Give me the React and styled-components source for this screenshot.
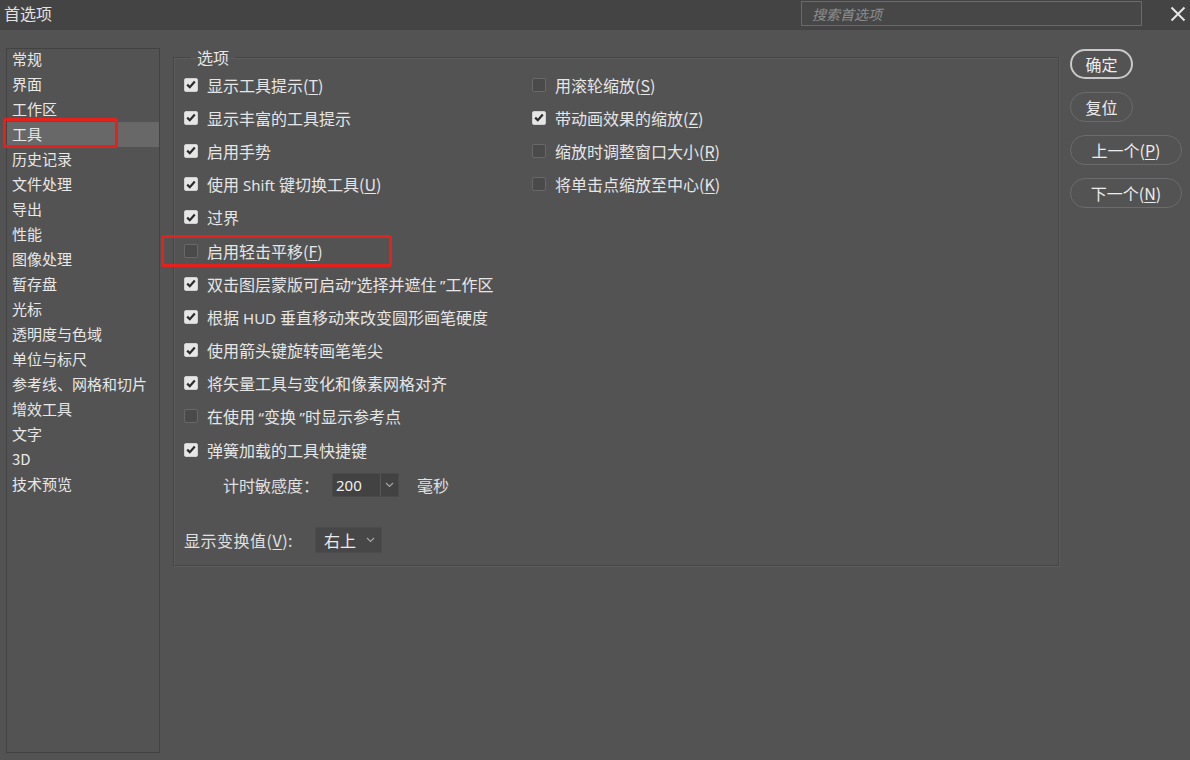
import React from "react";
import styled, { createGlobalStyle } from "styled-components";

const GlobalStyle = createGlobalStyle`
  html, body {
    margin: 0;
    padding: 0;
    background: #535353;
  }
  body {
    font-family: "Noto Sans CJK SC", "Noto Sans", sans-serif;
    color: #e4e4e4;
  }
`;

const Window = styled.div`
  width: 1190px;
  height: 760px;
  background: #535353;
  display: flex;
  flex-direction: column;
  overflow: hidden;
`;

const TitleBar = styled.div`
  height: 30px;
  background: #444444;
  display: flex;
  align-items: center;
  padding: 0 4px 0 4px;
`;

const Title = styled.div`
  font-size: 16px;
  color: #e2e2e2;
  line-height: 20px;
  margin-top: -5px;
`;

const Search = styled.div`
  margin-left: auto;
  width: 341px;
  height: 25px;
  margin-top: -3px;
  border: 1px solid #6a6a6a;
  background: #474747;
  display: flex;
  align-items: center;
  padding-left: 10px;
  box-sizing: border-box;
  font-size: 14px;
  font-style: italic;
  color: #8e8e8e;
`;

const Close = styled.div`
  width: 16px;
  height: 16px;
  margin-left: 28px;
  margin-top: -2px;
  svg {
    display: block;
  }
`;

const Body = styled.div`
  flex: 1;
  display: flex;
  align-items: flex-start;
  padding: 17px 0 0 6px;
`;

const CategoryList = styled.div`
  width: 154px;
  height: 705px;
  margin-top: 1px;
  box-sizing: border-box;
  border: 1px solid #424242;
  display: flex;
  flex-direction: column;
  & > :first-child {
    margin-top: -2px;
  }
`;

const Category = styled.div`
  position: relative;
  height: 25px;
  line-height: 24px;
  padding-left: 5px;
  font-size: 15px;
  color: #e8e8e8;
  background: ${(p) => (p.active ? "#686868" : "transparent")};
  ${(p) =>
    p.marked &&
    `
    &::after {
      content: "";
      position: absolute;
      left: -4px;
      top: -4px;
      width: 109px;
      height: 24px;
      border: 3px solid #e5211d;
      border-radius: 3px;
    }
  `}
`;

const Group = styled.fieldset`
  margin: 0 0 0 13px;
  width: 886px;
  height: 519px;
  box-sizing: border-box;
  padding: 1px 10px 0 10px;
  border: 1px solid #464646;
  box-shadow: inset 1px 1px 0 #5c5c5c, 1px 1px 0 #5c5c5c;
  min-width: 0;
`;

const Legend = styled.legend`
  margin-left: 7px;
  padding: 0 6px;
  font-size: 16px;
  line-height: 20px;
  color: #e6e6e6;
`;

const Columns = styled.div`
  display: grid;
  grid-template-columns: 348px 1fr;
`;

const Column = styled.div`
  display: flex;
  flex-direction: column;
`;

const Row = styled.div`
  position: relative;
  height: 33.2px;
  display: flex;
  align-items: center;
  gap: 9px;
  font-size: 16px;
  color: #e6e6e6;
  white-space: nowrap;
  ${(p) =>
    p.marked &&
    `
    &::after {
      content: "";
      position: absolute;
      left: -23px;
      top: 1px;
      width: 225px;
      height: 26px;
      border: 3px solid #e5211d;
      border-radius: 3px;
    }
  `}
`;

const Box = styled.span`
  width: 14px;
  height: 14px;
  box-sizing: border-box;
  border-radius: 2px;
  flex: none;
  display: flex;
  align-items: center;
  justify-content: center;
  background: ${(p) => (p.checked ? "#e6e6e6" : "#4a4a4a")};
  border: 1px solid ${(p) => (p.checked ? "#d0d0d0" : "#686868")};
`;

const Key = styled.span`
  text-decoration: underline;
  text-underline-offset: 2px;
`;

const Latin = styled.span`
  font-family: "Noto Sans", "Open Sans", sans-serif;
  font-size: 15px;
  margin: 0 ${(p) => (p.tight ? 0 : 4)}px;
`;

const SubRow = styled.div`
  display: flex;
  align-items: center;
  height: 36px;
  margin-top: 1px;
  padding-left: 39px;
  font-size: 16px;
  color: #e0e0e0;
`;

const SubLabel = styled.span`
  width: 109px;
`;

const Spinner = styled.div`
  width: 67px;
  height: 24px;
  background: #424242;
  border: 1px solid #4a4a4a;
  box-sizing: border-box;
  display: flex;
  align-items: stretch;
  font-family: "Noto Sans", sans-serif;
  font-size: 15px;
`;

const SpinValue = styled.div`
  flex: 1;
  display: flex;
  align-items: center;
  padding-left: 3px;
  color: #f0f0f0;
`;

const SpinArrow = styled.div`
  width: 17px;
  border-left: 1px solid #575757;
  display: flex;
  align-items: center;
  justify-content: center;
`;

const Unit = styled.span`
  margin-left: 18px;
`;

const TransformRow = styled.div`
  display: flex;
  align-items: center;
  height: 30px;
  margin-top: 22px;
  font-size: 16px;
  letter-spacing: 0.5px;
  color: #e0e0e0;
`;

const Select = styled.div`
  margin-left: 22px;
  width: 67px;
  height: 26px;
  background: #474747;
  border: 1px solid #4c4c4c;
  box-sizing: border-box;
  display: flex;
  align-items: center;
  padding: 0 6px 0 8px;
  justify-content: space-between;
  font-size: 16px;
  letter-spacing: 0;
  color: #ececec;
`;

const Buttons = styled.div`
  margin-left: 11px;
  margin-top: 2px;
  display: flex;
  flex-direction: column;
  align-items: flex-start;
  gap: 13px;
`;

const Button = styled.div`
  width: ${(p) => (p.wide ? "112px" : "63px")};
  height: 30px;
  box-sizing: border-box;
  border-radius: 15px;
  border: ${(p) => (p.primary ? "2px solid #c9c9c9" : "1px solid #6b6b6b")};
  display: flex;
  align-items: center;
  justify-content: center;
  font-size: 16px;
  color: #ececec;
`;

const Check = () => (
  <svg width="10" height="9" viewBox="0 0 10 9">
    <path d="M1.2 4.6 L3.8 7.2 L8.8 1.6" stroke="#2a2a2a" strokeWidth="2.2" fill="none" />
  </svg>
);

const Chevron = () => (
  <svg width="9" height="6" viewBox="0 0 9 6">
    <path d="M1 1 L4.5 4.5 L8 1" stroke="#a8a8a8" strokeWidth="1.1" fill="none" />
  </svg>
);

const Option = ({ checked, marked, children }) => (
  <Row marked={marked}>
    <Box checked={checked}>{checked && <Check />}</Box>
    <span>{children}</span>
  </Row>
);

const categories = [
  "常规",
  "界面",
  "工作区",
  "工具",
  "历史记录",
  "文件处理",
  "导出",
  "性能",
  "图像处理",
  "暂存盘",
  "光标",
  "透明度与色域",
  "单位与标尺",
  "参考线、网格和切片",
  "增效工具",
  "文字",
  "3D",
  "技术预览",
];

export default function App() {
  return (
    <>
      <GlobalStyle />
      <Window>
        <TitleBar>
          <Title>首选项</Title>
          <Search>搜索首选项</Search>
          <Close>
            <svg width="16" height="16" viewBox="0 0 16 16">
              <path d="M1.5 1.5 L14.5 14.5 M14.5 1.5 L1.5 14.5" stroke="#e6e6e6" strokeWidth="2" />
            </svg>
          </Close>
        </TitleBar>
        <Body>
          <CategoryList>
            {categories.map((c) => (
              <Category key={c} active={c === "工具"} marked={c === "工具"}>
                {c}
              </Category>
            ))}
          </CategoryList>
          <Group>
            <Legend>选项</Legend>
            <Columns>
              <Column>
                <Option checked>
                  显示工具提示(<Key>T</Key>)
                </Option>
                <Option checked>显示丰富的工具提示</Option>
                <Option checked>启用手势</Option>
                <Option checked>
                  使用<Latin>Shift</Latin>键切换工具(<Key>U</Key>)
                </Option>
                <Option checked>过界</Option>
                <Option marked>
                  启用轻击平移(<Key>F</Key>)
                </Option>
                <Option checked>
                  双击图层蒙版可启动<Latin tight>“</Latin>选择并遮住 <Latin tight>”</Latin>工作区
                </Option>
                <Option checked>
                  根据<Latin>HUD</Latin>垂直移动来改变圆形画笔硬度
                </Option>
                <Option checked>使用箭头键旋转画笔笔尖</Option>
                <Option checked>将矢量工具与变化和像素网格对齐</Option>
                <Option>
                  在使用 <Latin tight>“</Latin>变换 <Latin tight>”</Latin>时显示参考点
                </Option>
                <Option checked>弹簧加载的工具快捷键</Option>
                <SubRow>
                  <SubLabel>计时敏感度：</SubLabel>
                  <Spinner>
                    <SpinValue>200</SpinValue>
                    <SpinArrow>
                      <Chevron />
                    </SpinArrow>
                  </Spinner>
                  <Unit>毫秒</Unit>
                </SubRow>
                <TransformRow>
                  显示变换值(<Key>V</Key>):
                  <Select>
                    右上
                    <Chevron />
                  </Select>
                </TransformRow>
              </Column>
              <Column>
                <Option>
                  用滚轮缩放(<Key>S</Key>)
                </Option>
                <Option checked>
                  带动画效果的缩放(<Key>Z</Key>)
                </Option>
                <Option>
                  缩放时调整窗口大小(<Key>R</Key>)
                </Option>
                <Option>
                  将单击点缩放至中心(<Key>K</Key>)
                </Option>
              </Column>
            </Columns>
          </Group>
          <Buttons>
            <Button primary>确定</Button>
            <Button>复位</Button>
            <Button wide>
              上一个(<Key>P</Key>)
            </Button>
            <Button wide>
              下一个(<Key>N</Key>)
            </Button>
          </Buttons>
        </Body>
      </Window>
    </>
  );
}
